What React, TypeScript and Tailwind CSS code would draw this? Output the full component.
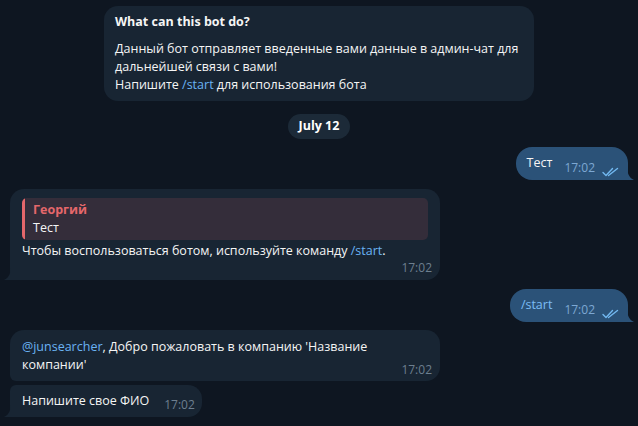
import React from 'react';

const font = { fontFamily: '"Open Sans", "Noto Sans", sans-serif' };

function Checks() {
    return (
        <svg width="17" height="10" viewBox="0 0 17 10" fill="none" className="ml-[7px] mb-[3px]">
            <path d="M1 5.5 L4 8.5 L10.5 1.5" stroke="#72b8f0" strokeWidth="1.4" strokeLinecap="round" strokeLinejoin="round" />
            <path d="M6.5 8.5 L15.5 1.5" stroke="#72b8f0" strokeWidth="1.4" strokeLinecap="round" />
        </svg>
    );
}

function InTail() {
    return (
        <svg width="7" height="12" viewBox="0 0 7 12" className="absolute -left-[6px] bottom-0">
            <path d="M7 0 V12 H0 C3.5 10.5 6.5 7 7 0 Z" fill="#182533" />
        </svg>
    );
}

function OutTail() {
    return (
        <svg width="7" height="12" viewBox="0 0 7 12" className="absolute -right-[6px] bottom-0">
            <path d="M0 0 V12 H7 C3.5 10.5 0.5 7 0 0 Z" fill="#2b5278" />
        </svg>
    );
}

function OutMsg({ text, link }: { text: string; link?: boolean }) {
    return (
        <div className="relative self-end mr-[10px] flex items-end h-[33px] pl-[11px] pr-[9px] rounded-[16px] rounded-br-none bg-[#2b5278]">
            <span className={`mb-[8px] text-[12.5px] leading-[18px] ${link ? 'text-[#7cbcf5]' : 'text-[#f5f5f5]'}`}>{text}</span>
            <span className="ml-[12px] mb-[4px] text-[12px] leading-[16px] text-[#7da8d3]">17:02</span>
            <Checks />
            <OutTail />
        </div>
    );
}

export default function App() {
    return (
        <div style={font} className="w-[638px] h-[426px] overflow-hidden bg-[#0e1621] flex flex-col">
            <div className="mt-[6px] ml-[104px] w-[430px] rounded-[14px] bg-[#182533] pl-[11px] pr-[8px] pt-[7px] pb-[7px] text-[12.5px] leading-[18px] text-[#f5f5f5]">
                <p className="font-bold">What can this bot do?</p>
                <p className="mt-[9px]">
                    Данный бот отправляет введенные вами данные в админ-чат для дальнейшей связи с вами!
                    <br />
                    Напишите <span className="text-[#6ab3f3]">/start</span> для использования бота
                </p>
            </div>

            <div className="mt-[13px] self-center flex items-center h-[25px] px-[11px] rounded-full bg-[#1c2a38] text-[12.5px] font-bold text-white">
                July 12
            </div>

            <div className="mt-[8px] flex flex-col">
                <OutMsg text="Тест" />
            </div>

            <div className="relative mt-[9px] ml-[10px] w-[430px] rounded-[14px] rounded-bl-none bg-[#182533] px-[12px] pt-[9px] pb-[4px] text-[12.5px] leading-[18px] text-[#f5f5f5]">
                <div className="flex rounded-[5px] bg-[#342d3a] overflow-hidden">
                    <div className="w-[3px] bg-[#e5676b]" />
                    <div className="pl-[8px] pt-[3px] pb-[3px]">
                        <p className="font-bold text-[#e5676b]">Георгий</p>
                        <p>Тест</p>
                    </div>
                </div>
                <p className="mt-[2px]">
                    Чтобы воспользоваться ботом, используйте команду <span className="text-[#6ab3f3]">/start</span>.
                </p>
                <p className="text-right -mr-[4px] text-[12px] leading-[16px] text-[#6d7f8f]">17:02</p>
                <InTail />
            </div>

            <div className="mt-[9px] flex flex-col">
                <OutMsg text="/start" link />
            </div>

            <div className="mt-[8px] ml-[10px] w-[430px] rounded-[14px] rounded-bl-[6px] bg-[#182533] pl-[12px] pr-[8px] pt-[8px] pb-[3px] text-[12.5px] leading-[18px] text-[#f5f5f5]">
                <p>
                    <span className="text-[#6ab3f3]">@junsearcher</span>, Добро пожаловать в компанию 'Название
                    <br />
                    компании'
                </p>
                <p className="-mt-[12px] text-right text-[12px] leading-[16px] text-[#6d7f8f]">17:02</p>
            </div>

            <div className="relative mt-[4px] ml-[10px] self-start flex items-end h-[32px] rounded-[14px] rounded-tl-[6px] rounded-bl-none bg-[#182533] pl-[12px] pr-[7px]">
                <span className="mb-[7px] text-[12.5px] leading-[18px] text-[#f5f5f5]">Напишите свое ФИО</span>
                <span className="ml-[15px] mb-[4px] text-[12px] leading-[16px] text-[#6d7f8f]">17:02</span>
                <InTail />
            </div>
        </div>
    );
}
